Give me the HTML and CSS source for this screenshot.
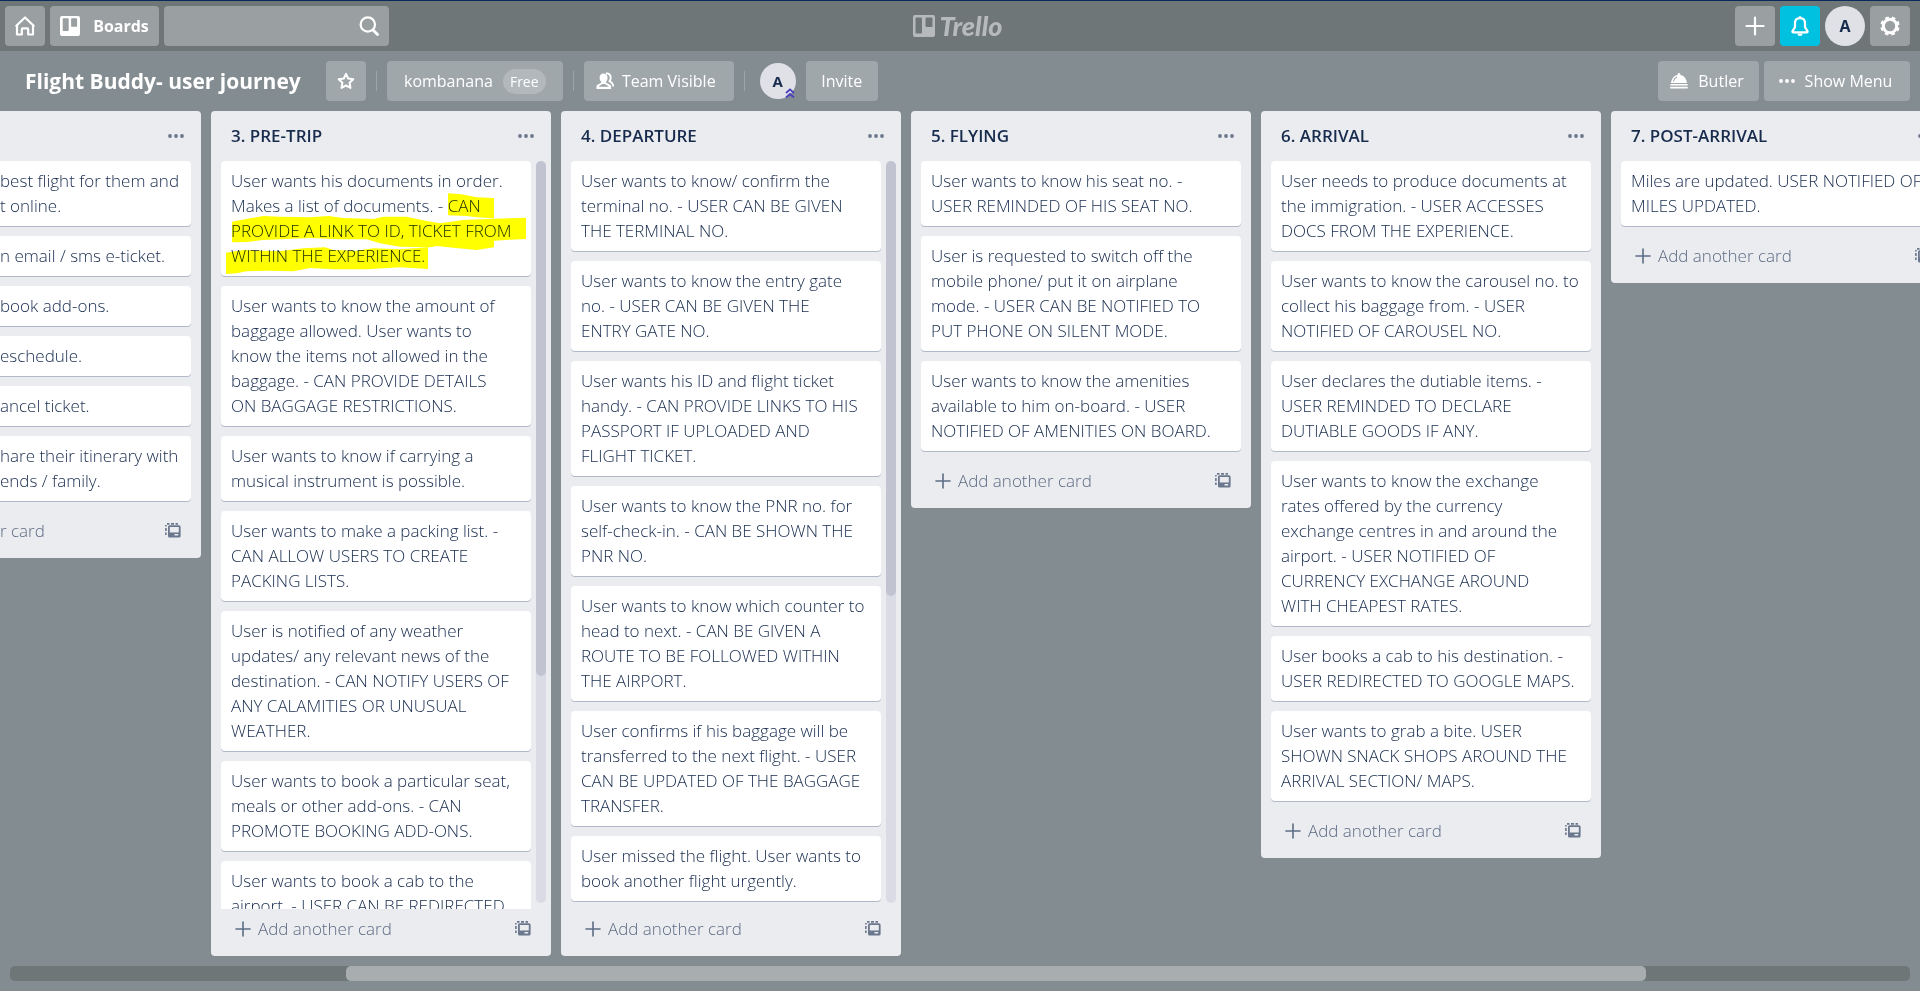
FILE: index.html
```html
<!DOCTYPE html>
<html lang="en">
<head>
<meta charset="utf-8">
<title>Flight Buddy- user journey</title>
<link rel="stylesheet" href="styles.css">
</head>
<body>
<svg class="defs" aria-hidden="true">
  <symbol id="plus" viewBox="0 0 20 20"><path d="M10 1.500v17M1.500 10h17" fill="none" stroke="currentColor" stroke-width="2.200" stroke-linecap="round"/></symbol>
  <symbol id="plus-thin" viewBox="0 0 16 16"><path d="M8 1v14M1 8h14" fill="none" stroke="currentColor" stroke-width="1.600" stroke-linecap="round"/></symbol>
  <symbol id="dots" viewBox="0 0 16 4"><circle cx="2" cy="2" r="1.900"/><circle cx="8" cy="2" r="1.900"/><circle cx="14" cy="2" r="1.900"/></symbol>
  <symbol id="template" viewBox="0 0 16 15"><path d="M.9 12V9.500M.9 8V5M.9 3.500V2M2 .9h2.500M6 .9h3M10.500 .9H13" fill="none" stroke="currentColor" stroke-width="1.600"/><path d="M4.600 2.300h9.400a1.600 1.600 0 0 1 1.600 1.600v9a1.600 1.600 0 0 1-1.600 1.600H4.600A1.600 1.600 0 0 1 3 12.900v-9a1.600 1.600 0 0 1 1.600-1.600zm.2 1.700v5.500h9V4zm4.700 7v1.600h3.700V11z" fill-rule="evenodd"/></symbol>
</svg>

<header class="topbar">
  <div class="group">
    <button class="btn square" aria-label="Home"><svg width="20" height="20" viewBox="0 0 20 20"><path d="M1.300 9.800 10 1.500l8.700 8.300M2 9.200V18.500h4.800v-5.200a1 1 0 0 1 1-1h4.400a1 1 0 0 1 1 1v5.200H18V9.200" fill="none" stroke="currentColor" stroke-width="2.200" stroke-linejoin="round" stroke-linecap="round"/></svg></button>
    <button class="btn boards"><svg width="20" height="20" viewBox="0 0 20 20"><path d="M2 0h16a2 2 0 0 1 2 2v16a2 2 0 0 1-2 2H2a2 2 0 0 1-2-2V2a2 2 0 0 1 2-2zm1.500 2.200a.8.800 0 0 0-.8.800v11.200c0 .5.300.8.800.8h4.400c.5 0 .8-.3.800-.8V3a.8.800 0 0 0-.8-.8zm8.400 0a.8.800 0 0 0-.8.800v7c0 .5.300.8.800.8h4.400c.5 0 .8-.3.800-.8V3a.8.800 0 0 0-.8-.8z" fill="currentColor" fill-rule="evenodd"/></svg>Boards</button>
    <label class="search"><input type="search" aria-label="Search"><svg width="20" height="20" viewBox="0 0 20 20"><circle cx="8.800" cy="8.500" r="7.200" fill="none" stroke="currentColor" stroke-width="2.200"/><path d="m14 14 4.500 4.500" stroke="currentColor" stroke-width="2.800" stroke-linecap="round"/></svg></label>
  </div>
  <a class="logo" href="#"><svg width="22" height="22" viewBox="0 0 22 22"><path d="M2 0h18a2 2 0 0 1 2 2v18a2 2 0 0 1-2 2H2a2 2 0 0 1-2-2V2a2 2 0 0 1 2-2zm1.500 2.500a1 1 0 0 0-1 1v14a1 1 0 0 0 1 1h4.500a1 1 0 0 0 1-1v-14a1 1 0 0 0-1-1zm10 0a1 1 0 0 0-1 1V11a1 1 0 0 0 1 1h5a1 1 0 0 0 1-1V3.500a1 1 0 0 0-1-1z" fill="currentColor" fill-rule="evenodd"/></svg>Trello</a>
  <div class="group right">
    <button class="btn square" aria-label="Create"><svg width="20" height="20"><use href="#plus"/></svg></button>
    <button class="btn square bell" aria-label="Notifications"><svg width="20" height="22" viewBox="0 0 20 22"><path d="M10 3.200c-3.200 0-5 2.300-5 5.300v3.700L2.500 16.200c-.3.600 0 1.100.6 1.100h13.800c.6 0 .9-.5.600-1.100L15 12.200V8.500c0-3-1.800-5.300-5-5.300z" fill="none" stroke="currentColor" stroke-width="2.200" stroke-linejoin="round"/><path d="M8.500 2.500a1.500 1.500 0 0 1 3 0M7.500 18.500h5a2.500 2.500 0 0 1-5 0z" fill="currentColor"/></svg></button>
    <button class="avatar" aria-label="Account">A</button>
    <button class="btn square" aria-label="Settings"><svg width="20" height="20" viewBox="0 0 20 20"><circle cx="10" cy="10" r="6.700" fill="none" stroke="currentColor" stroke-width="3"/><circle cx="10" cy="10" r="8.600" fill="none" stroke="currentColor" stroke-width="2.200" stroke-dasharray="3.600 3.154" stroke-dashoffset="-1.600"/></svg></button>
  </div>
</header>

<main class="board">
  <div class="board-bar">
    <h1>Flight Buddy- user journey</h1>
    <button class="chip square" aria-label="Star board"><svg width="18" height="18" viewBox="0 0 18 18"><path d="m9 1.800 2.200 4.700 5.100.7-3.700 3.600.9 5.100L9 13.500l-4.500 2.400.9-5.100L1.700 7.200l5.100-.7z" fill="none" stroke="currentColor" stroke-width="2" stroke-linejoin="round"/></svg></button>
    <span class="sep"></span>
    <button class="chip team">kombanana<span class="pill">Free</span></button>
    <span class="sep"></span>
    <button class="chip visible"><svg width="18" height="18" viewBox="0 0 18 18"><path d="M7.500 1.500c2.600 0 4.100 1.900 4.100 4.300 0 1.600-.7 3-1.500 3.900v1l4 2.100c.7.400 1 1 1 1.800V17H.5v-2.400c0-.8.400-1.400 1-1.800l3.700-2.100v-1c-.9-.9-1.600-2.300-1.600-3.900 0-2.400 1.400-4.300 3.900-4.300zM6.600 12l-3.500 2v.8h9.300V14L8.700 12z" fill="currentColor" fill-rule="evenodd"/><path d="M10 1.200c3 .2 4.700 2 4.700 4.600 0 1.300-.4 2.300-1.100 3.300 2.500 1.300 3.700 2.400 3.700 5.400" fill="none" stroke="currentColor" stroke-width="1.900"/></svg>Team Visible</button>
    <span class="sep"></span>
    <span class="member">A<svg width="10" height="11" viewBox="0 0 10 11"><path d="m1 5 4-3.500L9 5M1 9.500 5 6l4 3.500" fill="none" stroke="currentColor" stroke-width="1.700"/></svg></span>
    <button class="chip invite">Invite</button>
    <div class="tools">
      <button class="chip butler"><svg width="18" height="16" viewBox="0 0 18 16"><path d="M9 0a1.300 1.300 0 0 1 1.200 1.900c3.700.6 6.300 3.500 6.800 8.100H1c.5-4.600 3.100-7.500 6.800-8.100A1.300 1.300 0 0 1 9 0zM.3 11h17.400v1.600H.3zM.3 13.700h17.400v1.900H.3z" fill="currentColor"/><path d="M3.300 8.500c.5-2.200 1.700-3.700 3.700-4.500" fill="none" stroke="#a0a7ab" stroke-width="1.100"/></svg>Butler</button>
      <button class="chip menu"><svg width="16" height="4" fill="currentColor"><use href="#dots"/></svg>Show Menu</button>
    </div>
  </div>

  <div class="lists">
    <section class="list cut" aria-label="Booking">
      <div class="head"><h2></h2><button class="more" aria-label="List actions"><svg width="16" height="4"><use href="#dots"/></svg></button></div>
      <div class="body"><div class="cards">
        <article class="card">best flight for them and
t online.</article>
        <article class="card">n email / sms e-ticket.</article>
        <article class="card">book add-ons.</article>
        <article class="card">eschedule.</article>
        <article class="card">ancel ticket.</article>
        <article class="card">hare their itinerary with
ends / family.</article>
      </div></div>
      <div class="foot"><button class="add">r card</button><button class="tpl" aria-label="Create from template"><svg width="16" height="15"><use href="#template"/></svg></button></div>
    </section>

    <section class="list">
      <div class="head"><h2>3. PRE-TRIP</h2><button class="more" aria-label="List actions"><svg width="16" height="4"><use href="#dots"/></svg></button></div>
      <div class="body"><div class="cards">
        <article class="card">User wants his documents in order.
Makes a list of documents. - CAN
PROVIDE A LINK TO ID, TICKET FROM
WITHIN THE EXPERIENCE.<svg class="marker" viewBox="63 153 930 345"><path d="M744 250l41 3 45 9 52 2v61l-52-3-30-4-56-2zM96 335l54-10 40-7 50 2 90 2 55-4 45 6 90 3 30-7h70l60 13 40 7 70-10 90-4 98-3v64l-48 2-48 3v20l-52 8-70-7-50-5-20 4-90-2-60-10-40-12h-80l-90-4-90 4-50 2-50 6-44 1zM78 428l52-8 110 4 70-9 65-3 25 8 70 2 50-7 80 3 84-6v65l-84-5-100 6H400l-70-4-50 10-70-2-70 2-30 6-32 2z" fill="#ff0"/></svg></article>
        <article class="card">User wants to know the amount of
baggage allowed. User wants to
know the items not allowed in the
baggage. - CAN PROVIDE DETAILS
ON BAGGAGE RESTRICTIONS.</article>
        <article class="card">User wants to know if carrying a
musical instrument is possible.</article>
        <article class="card">User wants to make a packing list. -
CAN ALLOW USERS TO CREATE
PACKING LISTS.</article>
        <article class="card">User is notified of any weather
updates/ any relevant news of the
destination. - CAN NOTIFY USERS OF
ANY CALAMITIES OR UNUSUAL
WEATHER.</article>
        <article class="card">User wants to book a particular seat,
meals or other add-ons. - CAN
PROMOTE BOOKING ADD-ONS.</article>
        <article class="card">User wants to book a cab to the
airport. - USER CAN BE REDIRECTED</article>
      </div><div class="track"><div class="thumb" style="height:69.4%"></div></div></div>
      <div class="foot"><button class="add"><svg width="16" height="16"><use href="#plus-thin"/></svg>Add another card</button><button class="tpl" aria-label="Create from template"><svg width="16" height="15"><use href="#template"/></svg></button></div>
    </section>

    <section class="list">
      <div class="head"><h2>4. DEPARTURE</h2><button class="more" aria-label="List actions"><svg width="16" height="4"><use href="#dots"/></svg></button></div>
      <div class="body"><div class="cards">
        <article class="card">User wants to know/ confirm the
terminal no. - USER CAN BE GIVEN
THE TERMINAL NO.</article>
        <article class="card">User wants to know the entry gate
no. - USER CAN BE GIVEN THE
ENTRY GATE NO.</article>
        <article class="card">User wants his ID and flight ticket
handy. - CAN PROVIDE LINKS TO HIS
PASSPORT IF UPLOADED AND
FLIGHT TICKET.</article>
        <article class="card">User wants to know the PNR no. for
self-check-in. - CAN BE SHOWN THE
PNR NO.</article>
        <article class="card">User wants to know which counter to
head to next. - CAN BE GIVEN A
ROUTE TO BE FOLLOWED WITHIN
THE AIRPORT.</article>
        <article class="card">User confirms if his baggage will be
transferred to the next flight. - USER
CAN BE UPDATED OF THE BAGGAGE
TRANSFER.</article>
        <article class="card">User missed the flight. User wants to
book another flight urgently.</article>
      </div><div class="track"><div class="thumb" style="height:58.6%"></div></div></div>
      <div class="foot"><button class="add"><svg width="16" height="16"><use href="#plus-thin"/></svg>Add another card</button><button class="tpl" aria-label="Create from template"><svg width="16" height="15"><use href="#template"/></svg></button></div>
    </section>

    <section class="list">
      <div class="head"><h2>5. FLYING</h2><button class="more" aria-label="List actions"><svg width="16" height="4"><use href="#dots"/></svg></button></div>
      <div class="body"><div class="cards">
        <article class="card">User wants to know his seat no. -
USER REMINDED OF HIS SEAT NO.</article>
        <article class="card">User is requested to switch off the
mobile phone/ put it on airplane
mode. - USER CAN BE NOTIFIED TO
PUT PHONE ON SILENT MODE.</article>
        <article class="card">User wants to know the amenities
available to him on-board. - USER
NOTIFIED OF AMENITIES ON BOARD.</article>
      </div></div>
      <div class="foot"><button class="add"><svg width="16" height="16"><use href="#plus-thin"/></svg>Add another card</button><button class="tpl" aria-label="Create from template"><svg width="16" height="15"><use href="#template"/></svg></button></div>
    </section>

    <section class="list">
      <div class="head"><h2>6. ARRIVAL</h2><button class="more" aria-label="List actions"><svg width="16" height="4"><use href="#dots"/></svg></button></div>
      <div class="body"><div class="cards">
        <article class="card">User needs to produce documents at
the immigration. - USER ACCESSES
DOCS FROM THE EXPERIENCE.</article>
        <article class="card">User wants to know the carousel no. to
collect his baggage from. - USER
NOTIFIED OF CAROUSEL NO.</article>
        <article class="card">User declares the dutiable items. -
USER REMINDED TO DECLARE
DUTIABLE GOODS IF ANY.</article>
        <article class="card">User wants to know the exchange
rates offered by the currency
exchange centres in and around the
airport. - USER NOTIFIED OF
CURRENCY EXCHANGE AROUND
WITH CHEAPEST RATES.</article>
        <article class="card">User books a cab to his destination. -
USER REDIRECTED TO GOOGLE MAPS.</article>
        <article class="card">User wants to grab a bite. USER
SHOWN SNACK SHOPS AROUND THE
ARRIVAL SECTION/ MAPS.</article>
      </div></div>
      <div class="foot"><button class="add"><svg width="16" height="16"><use href="#plus-thin"/></svg>Add another card</button><button class="tpl" aria-label="Create from template"><svg width="16" height="15"><use href="#template"/></svg></button></div>
    </section>

    <section class="list">
      <div class="head"><h2>7. POST-ARRIVAL</h2><button class="more" aria-label="List actions"><svg width="16" height="4"><use href="#dots"/></svg></button></div>
      <div class="body"><div class="cards">
        <article class="card">Miles are updated. USER NOTIFIED OF
MILES UPDATED.</article>
      </div></div>
      <div class="foot"><button class="add"><svg width="16" height="16"><use href="#plus-thin"/></svg>Add another card</button><button class="tpl" aria-label="Create from template"><svg width="16" height="15"><use href="#template"/></svg></button></div>
    </section>
  </div>

  <div class="hscroll"><div class="hthumb"></div></div>
</main>
</body>
</html>
```
FILE: styles.css
```css
* { box-sizing: border-box; }
body {
  margin: 0;
  height: 100vh;
  display: flex;
  flex-direction: column;
  overflow: hidden;
  background: #838c91;
  color: #172b4d;
  font: 16px/25px "Open Sans", "Noto Sans", sans-serif;
}
button, input { font: inherit; color: inherit; border: 0; padding: 0; background: none; }
h1, h2 { margin: 0; }
svg { flex: none; display: block; }
.defs { position: absolute; width: 0; height: 0; }

.topbar {
  flex: none;
  display: grid;
  grid-template-columns: 1fr auto 1fr;
  align-items: center;
  padding: 5px 10px 5px 5px;
  border-top: 1px solid #0a2a5c;
  background: #6f7678;
  color: #fff;
}
.group { display: flex; gap: 5px; }
.right { justify-content: flex-end; }
.btn {
  height: 40px;
  display: flex;
  align-items: center;
  justify-content: center;
  border-radius: 4px;
  background: #9a9fa1;
  color: #fff;
}
.square { width: 40px; }
.boards { width: 109px; gap: 13px; font-weight: 700; }
.bell { background: #00c2e0; }
.avatar {
  width: 40px;
  height: 40px;
  border-radius: 50%;
  background: #dfe1e6;
  color: #172b4d;
  font-weight: 700;
}
.search {
  display: flex;
  align-items: center;
  width: 225px;
  height: 40px;
  padding: 0 10px;
  border-radius: 4px;
  background: #9a9fa1;
}
.search input { flex: 1; min-width: 0; height: 100%; outline: 0; }
.logo {
  display: flex;
  align-items: center;
  gap: 5px;
  color: #b7babc;
  font: italic 900 27px/40px Lato, sans-serif;
  text-decoration: none;
}

.board { flex: 1; min-height: 0; display: flex; flex-direction: column; }
.board-bar {
  flex: none;
  display: flex;
  align-items: center;
  padding: 10px 10px 10px 25px;
  color: #fff;
}
h1 { margin-right: 25px; font-size: 21px; line-height: 40px; font-weight: 700; white-space: nowrap; }
.chip {
  height: 40px;
  display: flex;
  align-items: center;
  justify-content: center;
  border-radius: 4px;
  background: #a0a7ab;
  color: #fff;
  white-space: nowrap;
}
.sep { width: 1px; height: 20px; margin: 0 10px; background: #9ea5a9; }
.team { width: 176px; gap: 10px; }
.pill {
  padding: 0 7px;
  border-radius: 13px;
  background: #b2b8bb;
  font-size: 14px;
}
.visible { width: 150px; gap: 8px; padding-right: 6px; }
.member {
  position: relative;
  width: 36px;
  height: 36px;
  margin: 0 10px 0 5px;
  border-radius: 50%;
  background: #dfe1e6;
  color: #172b4d;
  font-weight: 700;
  font-size: 15px;
  line-height: 36px;
  text-align: center;
}
.member svg { position: absolute; right: 1px; bottom: 0; color: #4a3fc0; }
.invite { width: 72px; }
.tools { display: flex; gap: 5px; margin-left: auto; }
.butler { width: 101px; gap: 10px; padding-right: 3px; }
.menu { width: 146px; gap: 10px; padding-right: 3px; }

.lists {
  flex: 1;
  min-height: 0;
  display: flex;
  align-items: flex-start;
  gap: 10px;
  overflow: hidden;
  font-size: 17px;
}
.list {
  flex: none;
  display: flex;
  flex-direction: column;
  width: 340px;
  max-height: 100%;
  border-radius: 4px;
  background: #ebecf0;
}
.head {
  flex: none;
  display: flex;
  align-items: center;
  justify-content: space-between;
  height: 50px;
  padding: 0 17px 1px 20px;
}
h2 { font-size: 17px; line-height: 25px; font-weight: 550; }
.more, .tpl { color: #6b778c; fill: currentColor; }
.body { flex: 0 1 auto; min-height: 0; display: flex; padding-left: 10px; overflow: hidden; }
.cards { flex: 1; min-width: 0; margin-right: 10px; }
.card {
  position: relative;
  margin-bottom: 10px;
  padding: 7px 10px 8px;
  border-radius: 4px;
  background: #fff;
  box-shadow: 0 1px 0 #b1b8c7;
  font-weight: 340;
  white-space: pre;
}
.marker {
  position: absolute;
  inset: 0;
  width: 100%;
  height: 100%;
  mix-blend-mode: multiply;
}
.body:has(.track) .cards { margin-right: 5px; }
.track { flex: none; width: 10px; margin: 0 5px 6px 0; border-radius: 5px; background: #dadbe4; }
.thumb { border-radius: 5px; background: #c1c4d0; }
.foot {
  flex: none;
  display: flex;
  align-items: center;
  justify-content: space-between;
  height: 47px;
  padding: 0 20px 8px 24px;
  color: #5e6c84;
  font-weight: 340;
}
.add { display: flex; align-items: center; gap: 7px; }
.cut { width: 201px; border-radius: 0 4px 4px 0; }
.cut .body, .cut .foot { padding-left: 0; }
.cut .card { padding-left: 0; border-radius: 0 4px 4px 0; }

.hscroll {
  flex: none;
  height: 15px;
  margin: 10px;
  border-radius: 5px;
  background: #6f7678;
}
.hthumb { width: 68.4%; height: 100%; margin-left: 17.7%; border-radius: 5px; background: #a8adb0; }
```
